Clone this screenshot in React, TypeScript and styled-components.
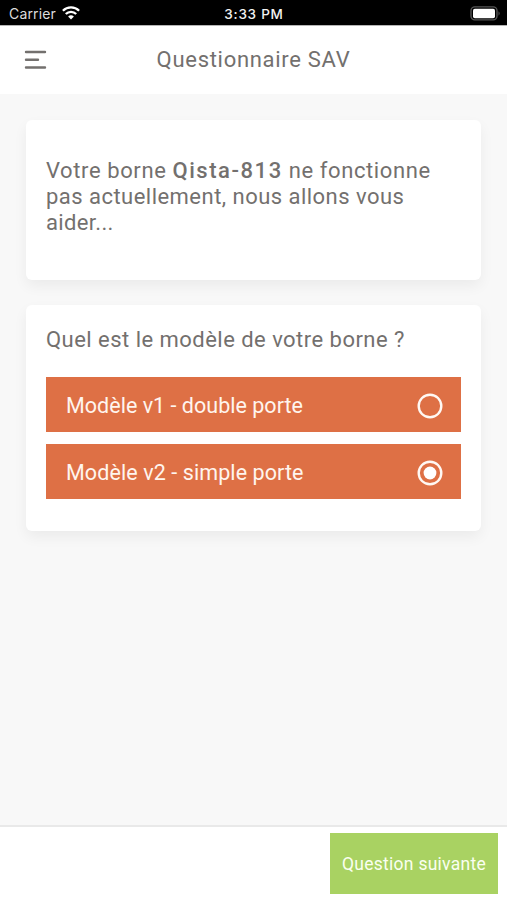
import React, { useState } from "react";
import styled, { createGlobalStyle } from "styled-components";

const GlobalStyle = createGlobalStyle`
  * { box-sizing: border-box; }
  body { margin: 0; font-family: Roboto, "Liberation Sans", sans-serif; color: #73706e; }
`;

const Screen = styled.div`
  display: flex;
  flex-direction: column;
  width: 100%;
  height: 900px;
  overflow: hidden;
  background: #f8f8f8;
`;

const StatusBar = styled.div`
  display: grid;
  grid-template-columns: 1fr auto 1fr;
  align-items: center;
  height: 25px;
  padding: 3px 6px 0 9px;
  background: #000;
  color: #fff;
  font-family: Inter, "Liberation Sans", sans-serif;
  font-size: 14px;
  line-height: 22px;
`;

const Carrier = styled.div`
  display: flex;
  align-items: center;
  gap: 6px;
  color: #dcdcdc;
  letter-spacing: 0.15px;

  svg {
    margin-bottom: 2px;
  }
`;

const Clock = styled.div`
  margin-right: 2px;
  font-size: 13.5px;
  font-weight: 500;
  letter-spacing: 0.75px;
  color: #f2f2f2;
`;

const BatterySlot = styled.div`
  display: flex;
  justify-content: flex-end;
  padding-bottom: 1px;
`;

const Header = styled.header`
  display: grid;
  grid-template-columns: 1fr auto 1fr;
  align-items: center;
  height: 69px;
  padding: 0 24px;
  background: #fff;
  border-top: 1px solid #b5b5b5;
`;

const MenuButton = styled.button`
  display: flex;
  padding: 0;
  border: 0;
  background: none;
`;

const Title = styled.h1`
  margin: 0;
  font-size: 22px;
  font-weight: 400;
  line-height: 26px;
  letter-spacing: 0.7px;
`;

const Content = styled.main`
  flex: 1;
  display: flex;
  flex-direction: column;
  gap: 25px;
  padding: 26px;
`;

const Card = styled.section<{ $height: number; $top: number }>`
  height: ${(p) => p.$height}px;
  padding: ${(p) => p.$top}px 20px 0;
  border-radius: 6px;
  background: #fff;
  box-shadow: 0 6px 14px rgba(0, 0, 0, 0.055);
`;

const Line = styled.div<{ $spacing: number }>`
  font-size: 22px;
  line-height: 26px;
  white-space: nowrap;
  letter-spacing: ${(p) => p.$spacing}px;
`;

const Product = styled.strong`
  font-weight: 500;
  letter-spacing: 1.55px;
`;

const Options = styled.div`
  display: flex;
  flex-direction: column;
  gap: 12px;
  margin-top: 24px;
`;

const Option = styled.button<{ $spacing: number }>`
  display: flex;
  align-items: center;
  justify-content: space-between;
  height: 55px;
  padding: 2px 18px 0 20px;
  border: 0;
  background: #de7045;
  color: #fff5ee;
  font-family: inherit;
  font-size: 21.5px;
  letter-spacing: ${(p) => p.$spacing}px;
`;

const Footer = styled.footer`
  display: flex;
  justify-content: flex-end;
  height: 75px;
  padding: 6px 9px 0;
  border-top: 2px solid #e9e9e9;
  background: #fff;
`;

const NextButton = styled.button`
  width: 168px;
  height: 61px;
  padding: 0;
  border: 0;
  background: #a9d262;
  color: #fafff0;
  font-family: inherit;
  font-size: 17.5px;
  letter-spacing: 0.27px;
  white-space: nowrap;
`;

const WifiIcon = () => (
  <svg width="18" height="14" viewBox="0 0 18 14" fill="none" stroke="#fff" strokeWidth="2.3">
    <path d="M0.9 4.8a11.5 11.5 0 0 1 16.2 0" />
    <path d="M3.8 8a7.3 7.3 0 0 1 10.4 0" />
    <path d="M9 13.6 6.1 10.6a4.2 4.2 0 0 1 5.8 0z" fill="#fff" stroke="none" />
  </svg>
);

const BatteryIcon = () => (
  <svg width="31" height="15" viewBox="0 0 31 15">
    <rect x="1" y="0.9" width="26" height="13" rx="3.8" fill="none" stroke="#555" strokeWidth="1.4" />
    <rect x="3" y="2.8" width="22" height="9.4" rx="1.8" fill="#fff" />
    <path d="M28.5 5.3q2.4 2.2 0 4.4z" fill="#555" />
  </svg>
);

const MenuIcon = () => (
  <svg width="23" height="20" viewBox="0 0 23 20" fill="none" stroke="#73706e" strokeWidth="2.4" strokeLinecap="round">
    <path d="M2 2h19M2 9.8h12M2 17.5h19" />
  </svg>
);

const RadioIcon = ({ checked }: { checked: boolean }) => (
  <svg width="26" height="26" viewBox="0 0 26 26">
    <circle cx="13" cy="13" r="11.3" fill="none" stroke="#fff8f3" strokeWidth="2.4" />
    {checked && <circle cx="13" cy="13" r="6.4" fill="#fff" />}
  </svg>
);

const models = [
  { label: "Modèle v1 - double porte", spacing: 0.02 },
  { label: "Modèle v2 - simple porte", spacing: 0.09 },
];

export default function App() {
  const [selected, setSelected] = useState(1);
  return (
    <>
      <GlobalStyle />
      <Screen>
        <StatusBar>
          <Carrier>
            Carrier <WifiIcon />
          </Carrier>
          <Clock>3:33 PM</Clock>
          <BatterySlot>
            <BatteryIcon />
          </BatterySlot>
        </StatusBar>
        <Header>
          <MenuButton aria-label="Menu">
            <MenuIcon />
          </MenuButton>
          <Title>Questionnaire SAV</Title>
        </Header>
        <Content>
          <Card $height={160} $top={38}>
            <Line $spacing={0.6}>
              Votre borne <Product>Qista-813</Product> ne fonctionne
            </Line>
            <Line $spacing={0.47}>pas actuellement, nous allons vous</Line>
            <Line $spacing={0.35}>aider...</Line>
          </Card>
          <Card $height={226} $top={22}>
            <Line $spacing={0.47}>Quel est le modèle de votre borne ?</Line>
            <Options role="radiogroup">
              {models.map((m, i) => (
                <Option
                  key={m.label}
                  role="radio"
                  aria-checked={selected === i}
                  $spacing={m.spacing}
                  onClick={() => setSelected(i)}
                >
                  {m.label}
                  <RadioIcon checked={selected === i} />
                </Option>
              ))}
            </Options>
          </Card>
        </Content>
        <Footer>
          <NextButton>Question suivante</NextButton>
        </Footer>
      </Screen>
    </>
  );
}
